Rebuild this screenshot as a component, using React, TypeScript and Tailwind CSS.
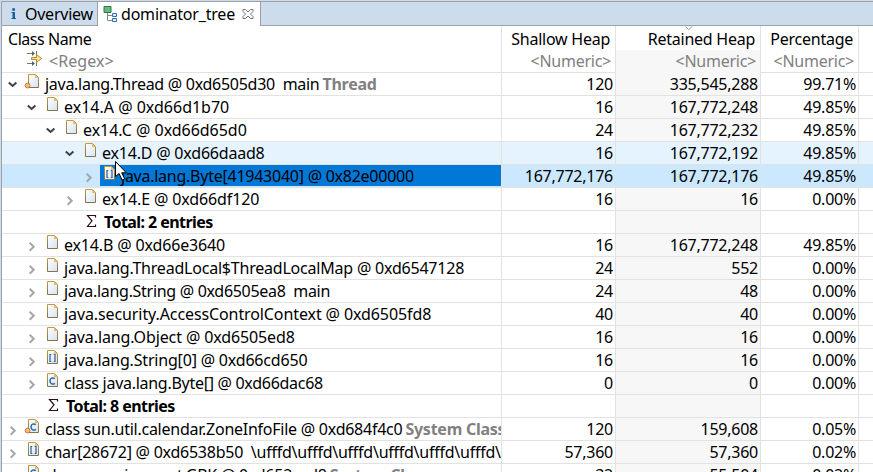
import React from "react";

type IconKind = "object" | "root" | "array" | "class" | "rootClass" | "sum";

interface Entry {
  level: number;
  icon: IconKind;
  open?: boolean;
  name: string;
  tracking?: string;
  tag?: string;
  values?: [string, string, string];
  state?: "hover" | "selected";
}

const entries: Entry[] = [
  { level: 0, icon: "root", open: true, name: "java.lang.Thread @ 0xd6505d30  main", tracking: "tracking-[-0.28px]", tag: "Thread", values: ["120", "335,545,288", "99.71%"] },
  { level: 1, icon: "object", open: true, name: "ex14.A @ 0xd66d1b70", tracking: "tracking-[0px]", values: ["16", "167,772,248", "49.85%"] },
  { level: 2, icon: "object", open: true, name: "ex14.C @ 0xd66d65d0", tracking: "tracking-[-0.03px]", values: ["24", "167,772,232", "49.85%"] },
  { level: 3, icon: "object", open: true, name: "ex14.D @ 0xd66daad8", tracking: "tracking-[-0.2px]", values: ["16", "167,772,192", "49.85%"], state: "hover" },
  { level: 4, icon: "array", name: "java.lang.Byte[41943040] @ 0x82e00000", values: ["167,772,176", "167,772,176", "49.85%"], state: "selected" },
  { level: 3, icon: "object", name: "ex14.E @ 0xd66df120", tracking: "tracking-[-0.12px]", values: ["16", "16", "0.00%"] },
  { level: 3, icon: "sum", name: "Total: 2 entries", tracking: "tracking-[-0.57px]" },
  { level: 1, icon: "object", name: "ex14.B @ 0xd66e3640", tracking: "tracking-[-0.15px]", values: ["16", "167,772,248", "49.85%"] },
  { level: 1, icon: "object", name: "java.lang.ThreadLocal$ThreadLocalMap @ 0xd6547128", tracking: "tracking-[-0.21px]", values: ["24", "552", "0.00%"] },
  { level: 1, icon: "object", name: "java.lang.String @ 0xd6505ea8  main", tracking: "tracking-[-0.3px]", values: ["24", "48", "0.00%"] },
  { level: 1, icon: "object", name: "java.security.AccessControlContext @ 0xd6505fd8", tracking: "tracking-[-0.1px]", values: ["40", "40", "0.00%"] },
  { level: 1, icon: "object", name: "java.lang.Object @ 0xd6505ed8", tracking: "tracking-[-0.12px]", values: ["16", "16", "0.00%"] },
  { level: 1, icon: "array", name: "java.lang.String[0] @ 0xd66cd650", tracking: "tracking-[-0.19px]", values: ["16", "16", "0.00%"] },
  { level: 1, icon: "class", name: "class java.lang.Byte[] @ 0xd66dac68", tracking: "tracking-[-0.28px]", values: ["0", "0", "0.00%"] },
  { level: 1, icon: "sum", name: "Total: 8 entries", tracking: "tracking-[-0.57px]" },
  { level: 0, icon: "rootClass", name: "class sun.util.calendar.ZoneInfoFile @ 0xd684f4c0", tag: "System Class", values: ["120", "159,608", "0.05%"] },
  { level: 0, icon: "array", name: "char[28672] @ 0xd6538b50  \\ufffd\\ufffd\\ufffd\\ufffd\\ufffd\\ufffd\\ufffd", values: ["57,360", "57,360", "0.02%"] },
  { level: 0, icon: "rootClass", name: "class sun.nio.cs.ext.GBK @ 0xd652ced8", tag: "System Class", values: ["32", "55,504", "0.02%"] },
];

const indents = ["pl-[4px]", "pl-[23px]", "pl-[42px]", "pl-[61px]", "pl-[80px]"];
const grid = "grid grid-cols-[500px_114px_145px_98px_14px]";

function Chevron({ open }: { open?: boolean }) {
  return (
    <svg className="h-[22px] w-[18px] shrink-0" viewBox="0 0 18 22" fill="none" strokeWidth="2">
      {open ? <path d="M2.8 9.5 6.6 13l3.8-3.5" stroke="#404040" /> : <path d="m4.7 8.7 4 4-4 4" stroke="#a6a6a6" />}
    </svg>
  );
}

function NodeIcon({ kind }: { kind: IconKind }) {
  if (kind === "sum") {
    return (
      <svg className="h-[22px] w-[23px] shrink-0" viewBox="0 0 23 22" fill="none">
        <path d="M14.5 6.5V4.5H6.5l4.5 5.3L6.5 15.5h8v-2" stroke="#2d0d12" strokeWidth="1.2" />
      </svg>
    );
  }
  const root = kind === "root" || kind === "rootClass";
  return (
    <svg className="h-[22px] w-[21px] shrink-0" viewBox="-1 0 21 22" fill="none">
      <defs>
        <linearGradient id="page" x1="0" y1="0" x2="1" y2="1">
          <stop offset="0" stopColor="#fff" />
          <stop offset="1" stopColor="#d5e3f6" />
        </linearGradient>
        <linearGradient id="edge" x1="0" y1="0" x2="0" y2="1">
          <stop offset="0" stopColor="#c2993f" />
          <stop offset="1" stopColor="#827348" />
        </linearGradient>
      </defs>
      <path d="M3.5 1.5h7l3 3v10h-10z" fill="url(#page)" stroke="url(#edge)" />
      <path d="M10 1.5v3.5h3.5z" fill="#e0bd6a" />
      {kind === "array" && <path d="M7.3 5.5H6v7h1.3M9.7 5.5H11v7H9.7" stroke="#2c5f9c" strokeWidth="1.2" />}
      {(kind === "class" || kind === "rootClass") && (
        <path d="M10.8 6.7C8.8 5.2 6 6 6 9s2.8 3.8 4.8 2.4" stroke="#2b6aa6" strokeWidth="1.5" />
      )}
      {root && <circle cx="2.6" cy="12.6" r="2.4" fill="#f8bd7c" stroke="#c87931" />}
    </svg>
  );
}

function Row({ entry }: { entry: Entry }) {
  const { level, icon, open, name, tracking = "", tag, values = ["", "", ""], state } = entry;
  const sum = icon === "sum";
  const bg = state === "hover" ? "bg-[#e5f3ff]" : state === "selected" ? "bg-[#cce8ff]" : "bg-white";
  const cell = "border-r border-[#e2e2e2] overflow-hidden whitespace-pre";
  return (
    <div className={`${grid} h-[23px] shrink-0 border-b border-[#e2e2e2] leading-[23px] ${bg}`}>
      <div className={`${cell} flex ${indents[level]}`}>
        {sum ? <span className="w-[18px] shrink-0" /> : <Chevron open={open} />}
        <div className={`flex h-[21px] grow ${state === "selected" ? "bg-[#0078d7]" : ""}`}>
          <NodeIcon kind={icon} />
          <span className={`${sum ? "font-bold" : ""} ${tracking}`}>{name}</span>
          {tag && <span className="pl-[3px] font-bold text-[#808080]">{tag}</span>}
        </div>
      </div>
      <div className={`${cell} pr-[2px] text-right`}>{values[0]}</div>
      <div className={`${cell} pr-[2px] text-right ${state ? "" : "bg-[#f7f7f7]"}`}>{values[1]}</div>
      <div className={`${cell} pr-[2px] text-right`}>{values[2]}</div>
    </div>
  );
}

function TabBar() {
  return (
    <div className="flex h-[25px] shrink-0 border-t border-[#a0a0a0] bg-[#ccdcec] text-black">
      <div className="flex w-[96px] items-center border-b border-r border-[#a0a0a0] pl-[9px]">
        <svg className="h-[14px] w-[14px] shrink-0" viewBox="0 0 14 14" fill="#16609c">
          <path d="M.5 5H4v6h1v1H.5v-1h1V6h-1zM1.3 1.3H4v2.4H1.3z" />
        </svg>
        Overview
      </div>
      <div className="flex w-[163px] items-center border-r border-[#a0a0a0] bg-white pl-[5px]">
        <svg className="h-[18px] w-[18px] shrink-0" viewBox="0 0 18 18" fill="none">
          <path d="M4.5 8v7.5H9M4.5 10.5H9" stroke="#7d8894" />
          <path d="M1 1.5h7v6H1z" fill="#68ba7d" stroke="#28794a" />
          <path d="M9.5 8.5h4v3h-4zM9.5 13.5h4v3h-4z" fill="#dcecff" stroke="#3770b0" />
        </svg>
        <span className="w-[117px] tracking-[-0.2px]">dominator_tree</span>
        <svg className="ml-1 h-[12px] w-[12px]" viewBox="0 0 12 12" fill="white" stroke="#777">
          <path d="M1 1.5h2.5L6 4l2.5-2.5H11v2L8.5 6 11 8.5v2H8.5L6 8l-2.5 2.5H1v-2L3.5 6 1 3.5z" />
        </svg>
      </div>
      <div className="grow border-b border-[#a0a0a0]" />
    </div>
  );
}

function Header() {
  const cell = "border-r border-[#e2e2e2] whitespace-pre text-right";
  return (
    <>
      <div className={`${grid} h-[24px] shrink-0 leading-[26px]`}>
        <div className="border-r border-[#e2e2e2] pl-[6px] tracking-[-0.45px]">Class Name</div>
        <div className={`${cell} pr-[5px]`}>Shallow Heap</div>
        <div className={`${cell} relative pr-[5px]`}>
          <svg className="absolute left-[69px] top-0 h-[5px] w-[8px]" viewBox="0 0 8 5" fill="none">
            <path d="m.5.5 3.2 3.2L7 .5" stroke="#999" />
          </svg>
          Retained Heap
        </div>
        <div className={`${cell} pr-[5px]`}>Percentage</div>
      </div>
      <div className={`${grid} h-[23px] shrink-0 border-b border-[#e2e2e2] leading-[23px] text-[#808080]`}>
        <div className="flex border-r border-[#e2e2e2] pl-[24px]">
          <svg className="h-[18px] w-[23px] shrink-0" viewBox="0 0 23 18" fill="none">
            <path d="M1 3.5h7M1 13.5h7M10.5 1v5M10.5 11v5" stroke="#667887" />
            <path d="m6 1 3 2.5L6 6zM6 11l3 2.5L6 16z" fill="#506779" />
            <path d="M5.5 7.5h5v-3l5 4-5 4v-3h-5z" fill="#ffe49a" stroke="#b98b25" />
          </svg>
          <span className="tracking-[0.05px]">&lt;Regex&gt;</span>
        </div>
        <div className={`${cell} pr-[4px]`}>&lt;Numeric&gt;</div>
        <div className={`${cell} bg-[#f7f7f7] pr-[4px]`}>&lt;Numeric&gt;</div>
        <div className={`${cell} pr-[4px]`}>&lt;Numeric&gt;</div>
      </div>
    </>
  );
}

export default function App() {
  return (
    <div className="relative h-[472px] w-[873px] overflow-hidden bg-[#ccdcec] pt-px pl-px font-['Noto_Sans',sans-serif] text-[16px] tracking-[-0.25px] text-black">
      <div className="flex h-full flex-col border-l border-[#a0a0a0] bg-white">
        <TabBar />
        <Header />
        {entries.map((entry) => (
          <Row key={entry.name} entry={entry} />
        ))}
      </div>
      <svg className="absolute left-[114px] top-[160px] h-[22px] w-[14px]" viewBox="0 0 14 22">
        <path d="M1.5 1.5v15l3.6-3 3 6.5 2.6-1.2-3-6h4.6z" fill="white" stroke="black" />
      </svg>
    </div>
  );
}
